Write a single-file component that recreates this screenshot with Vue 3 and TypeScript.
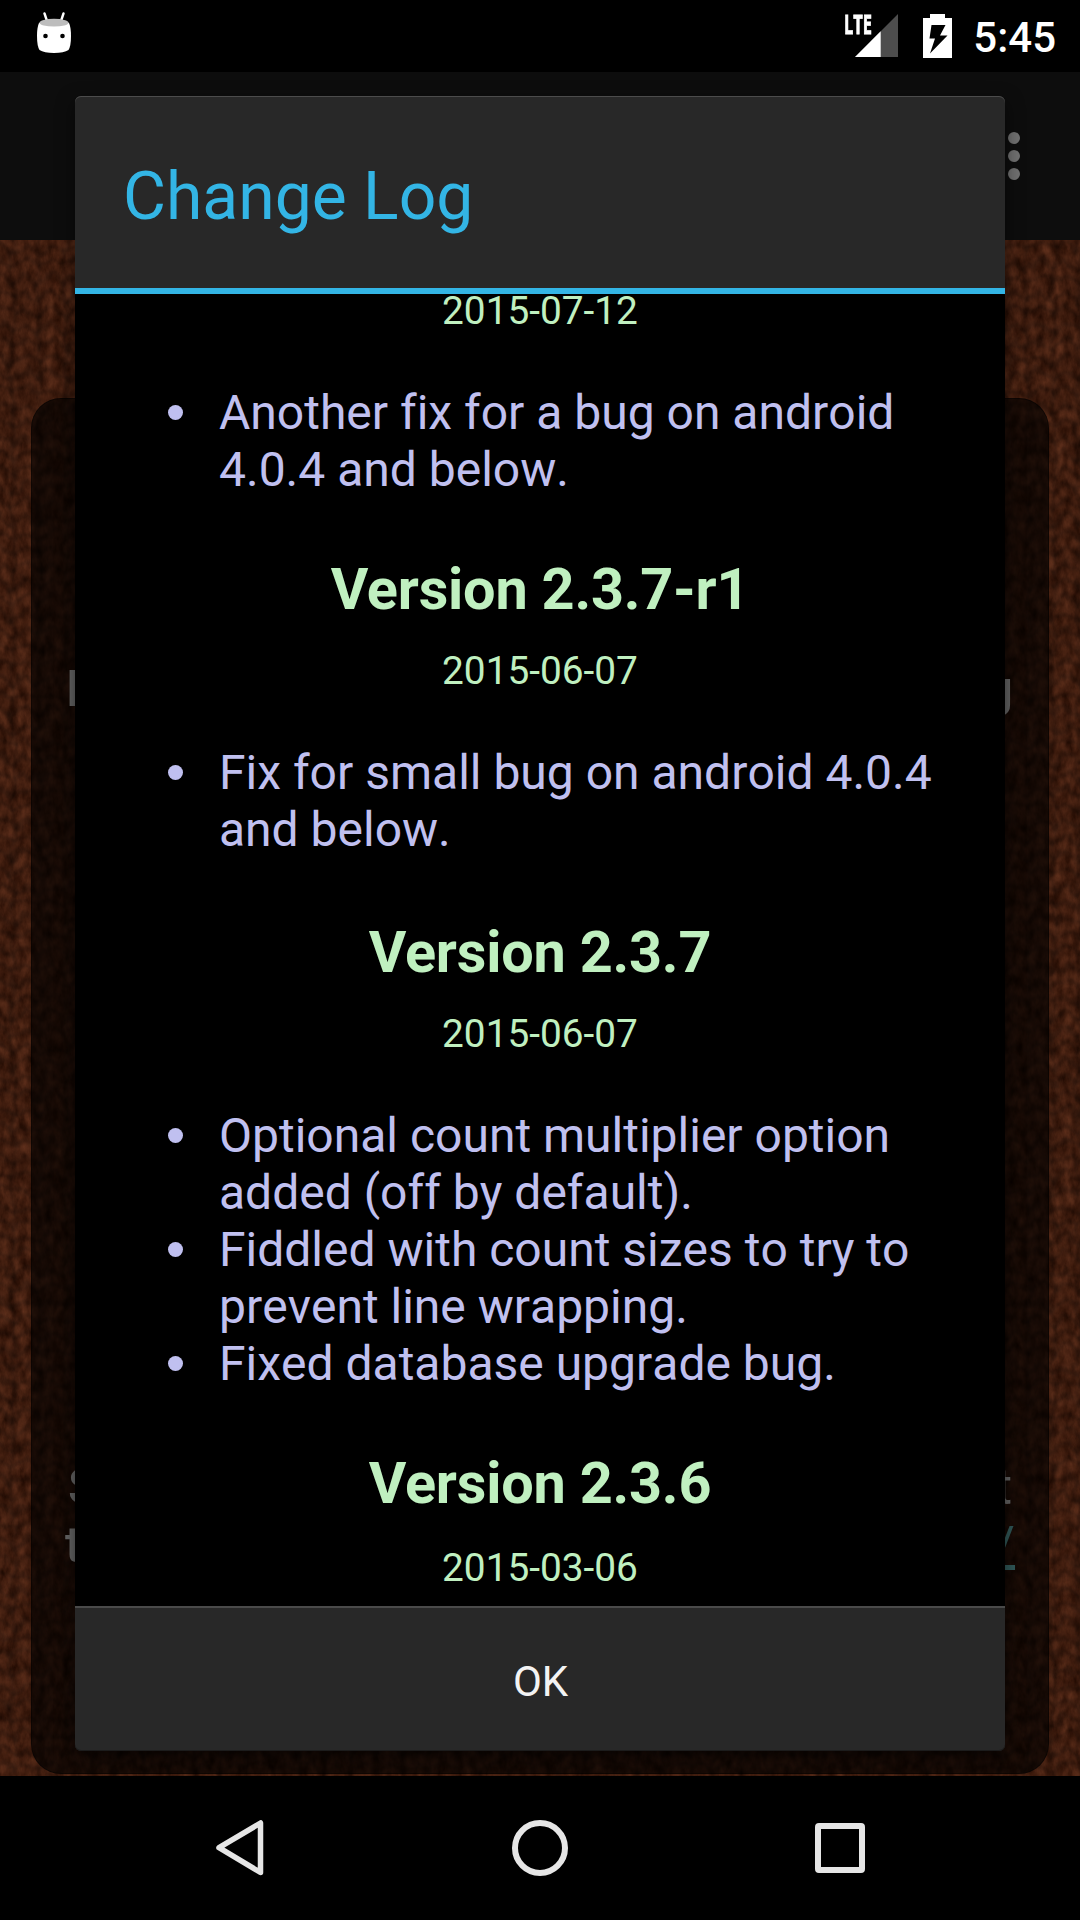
<script setup lang="ts">
interface Release {
  version: string
  date: string
  changes: string[]
}

const releases: Release[] = [
  { version: '', date: '2015-07-12', changes: ['Another fix for a bug on android 4.0.4 and below.'] },
  { version: 'Version 2.3.7-r1', date: '2015-06-07', changes: ['Fix for small bug on android 4.0.4 and below.'] },
  {
    version: 'Version 2.3.7',
    date: '2015-06-07',
    changes: [
      'Optional count multiplier option added (off by default).',
      'Fiddled with count sizes to try to prevent line wrapping.',
      'Fixed database upgrade bug.',
    ],
  },
  { version: 'Version 2.3.6', date: '2015-03-06', changes: [] },
]
</script>

<template>
  <div class="screen">
    <header class="status">
      <svg class="droid" width="36" height="42" viewBox="0 0 36 42">
        <path d="M8.500 1.500L11 9M27.500 1.500L25 9" stroke="#fff" stroke-width="2.400" stroke-linecap="round" />
        <path d="M3 11Q18 3 33 11Q35 15 35 24Q35 34 32.500 38Q28 41 18 41Q8 41 3.500 38Q1 34 1 24Q1 15 3 11Z" fill="#fff" />
        <ellipse cx="18" cy="10.700" rx="14.500" ry="3.900" fill="#bdbdbd" />
        <circle cx="9.500" cy="24" r="2.300" fill="#000" />
        <circle cx="26.500" cy="24" r="2.300" fill="#000" />
      </svg>
      <div class="status-right">
        <div class="signal">
          <span class="lte">LTE</span>
          <svg width="43" height="43" viewBox="0 0 43 43">
            <path d="M43 0V43H0Z" fill="#4d4d4d" />
            <path d="M25.700 17.300V43H0Z" fill="#fff" />
          </svg>
        </div>
        <svg class="battery" width="29" height="44" viewBox="0 0 29 44">
          <path d="M7 0H22V4H29V44H0V4H7Z" fill="#fff" />
          <path d="M8.500 11H22.500L17 21.500H24.500L7 39.500L12 24.500H6.500Z" fill="#000" />
        </svg>
        <span class="clock">5:45</span>
      </div>
    </header>

    <main class="app">
      <div class="appbar">
        <div class="overflow"><i></i><i></i><i></i></div>
      </div>
      <div class="backdrop">
        <svg class="knit" width="1080" height="1536">
          <filter id="wool" x="0" y="0" width="100%" height="100%" color-interpolation-filters="sRGB">
            <feTurbulence type="fractalNoise" baseFrequency="0.11 0.06" numOctaves="4" seed="7" />
            <feColorMatrix values="0.28 0.1 0 0 0.07  0.17 0.06 0 0 0.003  0.12 0.04 0 0 -0.02  0 0 0 0 1" />
          </filter>
          <filter id="fray" x="0" y="0" width="100%" height="100%">
            <feTurbulence type="fractalNoise" baseFrequency="0.05" numOctaves="3" seed="3" result="n" />
            <feDisplacementMap in="SourceGraphic" in2="n" scale="16" xChannelSelector="R" yChannelSelector="G" />
            <feGaussianBlur stdDeviation="1.800" />
          </filter>
          <pattern id="stitch" width="26" height="16" patternUnits="userSpaceOnUse">
            <path d="M0 3L13 12L26 3" fill="none" stroke="#000" stroke-opacity="0.24" stroke-width="4" />
            <path d="M13 0V16" stroke="#000" stroke-opacity="0.24" stroke-width="3" />
          </pattern>
          <rect width="1080" height="1536" filter="url(#wool)" />
          <rect x="-20" y="-20" width="1120" height="1576" fill="url(#stitch)" filter="url(#fray)" />
        </svg>
        <div class="panel">
          <p class="line intro"><span>K</span><span>g</span></p>
          <p class="line more"><span>S</span><span class="thin">t</span></p>
          <p class="line link"><span>t</span><span class="slash">/</span></p>
        </div>
      </div>
    </main>

    <section class="dialog">
      <h1>Change Log</h1>
      <div class="log">
        <article v-for="(r, i) in releases" :key="i">
          <h2 v-if="r.version">{{ r.version }}</h2>
          <div class="date">{{ r.date }}</div>
          <ul v-if="r.changes.length">
            <li v-for="c in r.changes" :key="c"><span>{{ c }}</span></li>
          </ul>
        </article>
      </div>
      <button>OK</button>
    </section>

    <nav>
      <svg width="50" height="58" viewBox="0 0 50 58">
        <path d="M45.500 4V53.500L4 28.700Z" fill="none" stroke="#e6e6e6" stroke-width="5.500" stroke-linejoin="round" />
      </svg>
      <svg width="58" height="58" viewBox="0 0 58 58">
        <circle cx="29" cy="29" r="25" fill="none" stroke="#e6e6e6" stroke-width="6" />
      </svg>
      <svg width="50" height="50" viewBox="0 0 50 50">
        <rect x="3" y="3" width="44" height="44" rx="1" fill="none" stroke="#e6e6e6" stroke-width="6" stroke-linejoin="round" />
      </svg>
    </nav>
  </div>
</template>

<style>
body {
  margin: 0;
  background: #000;
}
</style>

<style scoped>
.screen {
  position: relative;
  width: 1080px;
  height: 1920px;
  overflow: hidden;
  display: flex;
  flex-direction: column;
  background: #000;
  font-family: Roboto, sans-serif;
}
.status {
  height: 72px;
  display: flex;
  justify-content: space-between;
  padding: 0 24px 0 36px;
}
.droid {
  margin-top: 12px;
}
.status-right {
  display: flex;
  align-items: flex-start;
}
.signal {
  display: flex;
  margin-top: 14px;
}
.lte {
  width: 11px;
  white-space: nowrap;
  font: 700 26.5px/20px 'Open Sans', sans-serif;
  color: #fff;
  transform: scaleX(0.62);
  transform-origin: 0 0;
  -webkit-text-stroke: 0.8px #fff;
}
.battery {
  margin: 14px 21px 0 25px;
}
.clock {
  font-size: 42px;
  font-weight: 500;
  line-height: 72px;
  margin-top: 2px;
  color: #fff;
}
.app {
  height: 1704px;
}
.appbar {
  height: 168px;
  display: flex;
  justify-content: flex-end;
  align-items: center;
  background: #0d0d0d;
}
.overflow {
  display: flex;
  flex-direction: column;
  gap: 6px;
  margin-right: 60px;
}
.overflow i {
  width: 12px;
  height: 12px;
  border-radius: 50%;
  background: #717171;
}
.backdrop {
  position: relative;
  height: 1536px;
  background: #46200f;
}
.knit {
  position: absolute;
  inset: 0;
}
.panel {
  position: absolute;
  left: 31px;
  right: 31px;
  top: 158px;
  bottom: 2px;
  box-sizing: border-box;
  border: 1px solid rgba(0, 0, 0, 0.4);
  border-radius: 30px;
  background: rgba(0, 0, 0, 0.64);
}
.line {
  margin: 0;
  display: flex;
  justify-content: space-between;
  font-size: 50px;
  line-height: 57px;
  font-weight: 500;
  color: #656565;
}
.intro {
  padding: 262px 35px 0 34px;
}
.more {
  padding: 741px 36px 0 36px;
}
.link {
  padding: 1px 33px 0 33px;
}
.thin {
  font-weight: 400;
}
.slash {
  font-weight: 400;
  color: #315858;
  text-decoration: underline;
}
.dialog {
  position: absolute;
  left: 75px;
  top: 96px;
  width: 930px;
  height: 1655px;
  box-sizing: border-box;
  display: flex;
  flex-direction: column;
  border-radius: 6px;
  background: #282828;
  box-shadow: 0 6px 18px 0 rgba(0, 0, 0, 0.55), inset 0 1px 0 #4c4c4c, inset 0 -1px 0 #1c1c1c;
}
h1 {
  margin: 0;
  height: 192px;
  padding-left: 48px;
  font-size: 66px;
  font-weight: 400;
  line-height: 201px;
  color: #33b5e5;
  border-bottom: 6px solid #33b5e5;
}
.log {
  height: 1312px;
  overflow: hidden;
  background: #000;
  color: #c0c0f0;
  font-size: 48px;
  line-height: 57px;
}
article {
  display: flow-root;
}
.log h2 {
  margin: 0 0 24px;
  font-size: 57.6px;
  line-height: 68px;
  font-weight: 700;
  letter-spacing: -0.2px;
  text-align: center;
  color: #c0f0c0;
}
.date {
  font-size: 38.8px;
  line-height: 46px;
  text-align: center;
  color: #c0f0c0;
}
article:first-child .date {
  margin-top: -6px;
}
article:nth-child(3) {
  padding-top: 3px;
}
article:nth-child(4) h2 {
  margin-bottom: 27px;
}
ul {
  margin: 50px 24px 58px 0;
  padding-left: 93px;
  list-style: none;
  font-kerning: none;
  font-variant-ligatures: none;
}
li {
  display: flex;
}
li::before {
  content: '';
  flex: none;
  width: 15px;
  height: 15px;
  margin: 21px 36px 0 0;
  border-radius: 50%;
  background: #c0c0f0;
}
button {
  flex: 1;
  border: 0;
  border-top: 2px solid #4a4a4a;
  border-radius: 0 0 6px 6px;
  background: transparent;
  padding: 4px 0 0 1px;
  font: 42px Roboto, sans-serif;
  color: #f3f3f3;
}
nav {
  height: 144px;
  display: flex;
  align-items: center;
  justify-content: space-between;
  padding: 0 215px;
}
</style>
